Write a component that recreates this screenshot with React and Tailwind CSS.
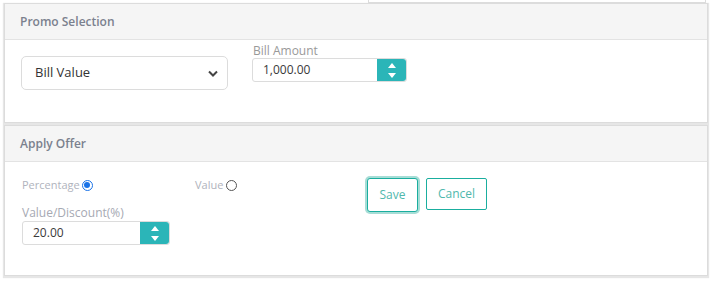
import React from 'react';

const font = { fontFamily: '"Open Sans", "Liberation Sans", sans-serif' };

const Spinner = () => (
  <div className="w-[29px] self-stretch bg-[#2bb5b8] rounded-r-[3px] flex flex-col items-center justify-center gap-[5px]">
    <svg width="8" height="5" viewBox="0 0 8 5"><path d="M4 0L8 5H0z" fill="#fff" /></svg>
    <svg width="8" height="5" viewBox="0 0 8 5"><path d="M0 0h8L4 5z" fill="#fff" /></svg>
  </div>
);

const NumberInput = ({ value, width }) => (
  <div className={`flex h-[24px] ${width} border border-[#dcdcdc] rounded-[3px] bg-white`}>
    <div className="flex-1 pl-[10px] text-[12px] leading-[22px] text-[#3a3a3a]">{value}</div>
    <Spinner />
  </div>
);

const Panel = ({ title, bodyHeight, children }) => (
  <div className="border border-[#dcdcdc] shadow-[0_1px_1px_1px_#e6e6e6] bg-white">
    <div className="h-[36px] bg-[#f5f5f5] border-b border-[#e3e3e3] px-[15px] flex items-center text-[12px] font-semibold text-[#7b818e]">
      {title}
    </div>
    <div className={bodyHeight}>{children}</div>
  </div>
);

const Radio = ({ checked }) =>
  checked ? (
    <span className="inline-block w-[11px] h-[11px] rounded-full border-[1.5px] border-[#1a73e8] bg-white p-[1.5px]">
      <span className="block w-full h-full rounded-full bg-[#1a73e8]" />
    </span>
  ) : (
    <span className="inline-block w-[11px] h-[11px] rounded-full border border-[#555] bg-white" />
  );

export default function App() {
  return (
    <div className="w-[714px] h-[283px] bg-white relative overflow-hidden" style={font}>
      <div className="absolute left-[368px] top-[-10px] w-[338px] h-[13px] border border-[#dcdcdc]" />
      <div className="pt-[3px] pl-[4px] pr-[6px] flex flex-col gap-[2px]">
        <Panel title="Promo Selection" bodyHeight="h-[82px]">
          <div className="flex pl-[16px] pt-[4px] gap-[24px]">
            <div className="mt-[12px] w-[207px] h-[34px] border border-[#dcdcdc] rounded-[5px] flex items-center justify-between pl-[13px] pr-[9px] text-[13px] text-[#333]">
              <span>Bill Value</span>
              <svg width="10" height="7" viewBox="0 0 10 7"><path d="M1 1.5l4 4 4-4" stroke="#444" strokeWidth="2" fill="none" /></svg>
            </div>
            <div className="flex flex-col">
              <div className="text-[12px] leading-[14px] text-[#999] pl-[1px]">Bill Amount</div>
              <NumberInput value="1,000.00" width="w-[155px]" />
            </div>
          </div>
        </Panel>
        <Panel title="Apply Offer" bodyHeight="h-[113px]">
          <div className="flex pl-[17px] pt-[15px]">
            <div className="w-[345px]">
              <div className="flex h-[16px] items-center text-[11px] text-[#b0b3bd]">
                <div className="w-[173px] flex items-center gap-[2px]">
                  <span>Percentage</span>
                  <Radio checked />
                </div>
                <div className="flex items-center gap-[3px]">
                  <span>Value</span>
                  <Radio />
                </div>
              </div>
              <div className="mt-[13px] text-[12px] leading-[14px] text-[#a6a9b3]">Value/Discount(%)</div>
              <div className="mt-[1px]">
                <NumberInput value="20.00" width="w-[148px]" />
              </div>
            </div>
            <div className="flex gap-[8px] mt-[1px]">
              <button className="w-[51px] h-[34px] rounded-[3px] border-[1.5px] border-[#1aae9f] shadow-[0_0_0_2px_#a7ddd6] text-[12px] text-[#4fb8ad] bg-white">Save</button>
              <button className="w-[61px] h-[32px] rounded-[2px] border border-[#1aae9f] text-[12px] text-[#4fb8ad] bg-white">Cancel</button>
            </div>
          </div>
        </Panel>
      </div>
    </div>
  );
}
